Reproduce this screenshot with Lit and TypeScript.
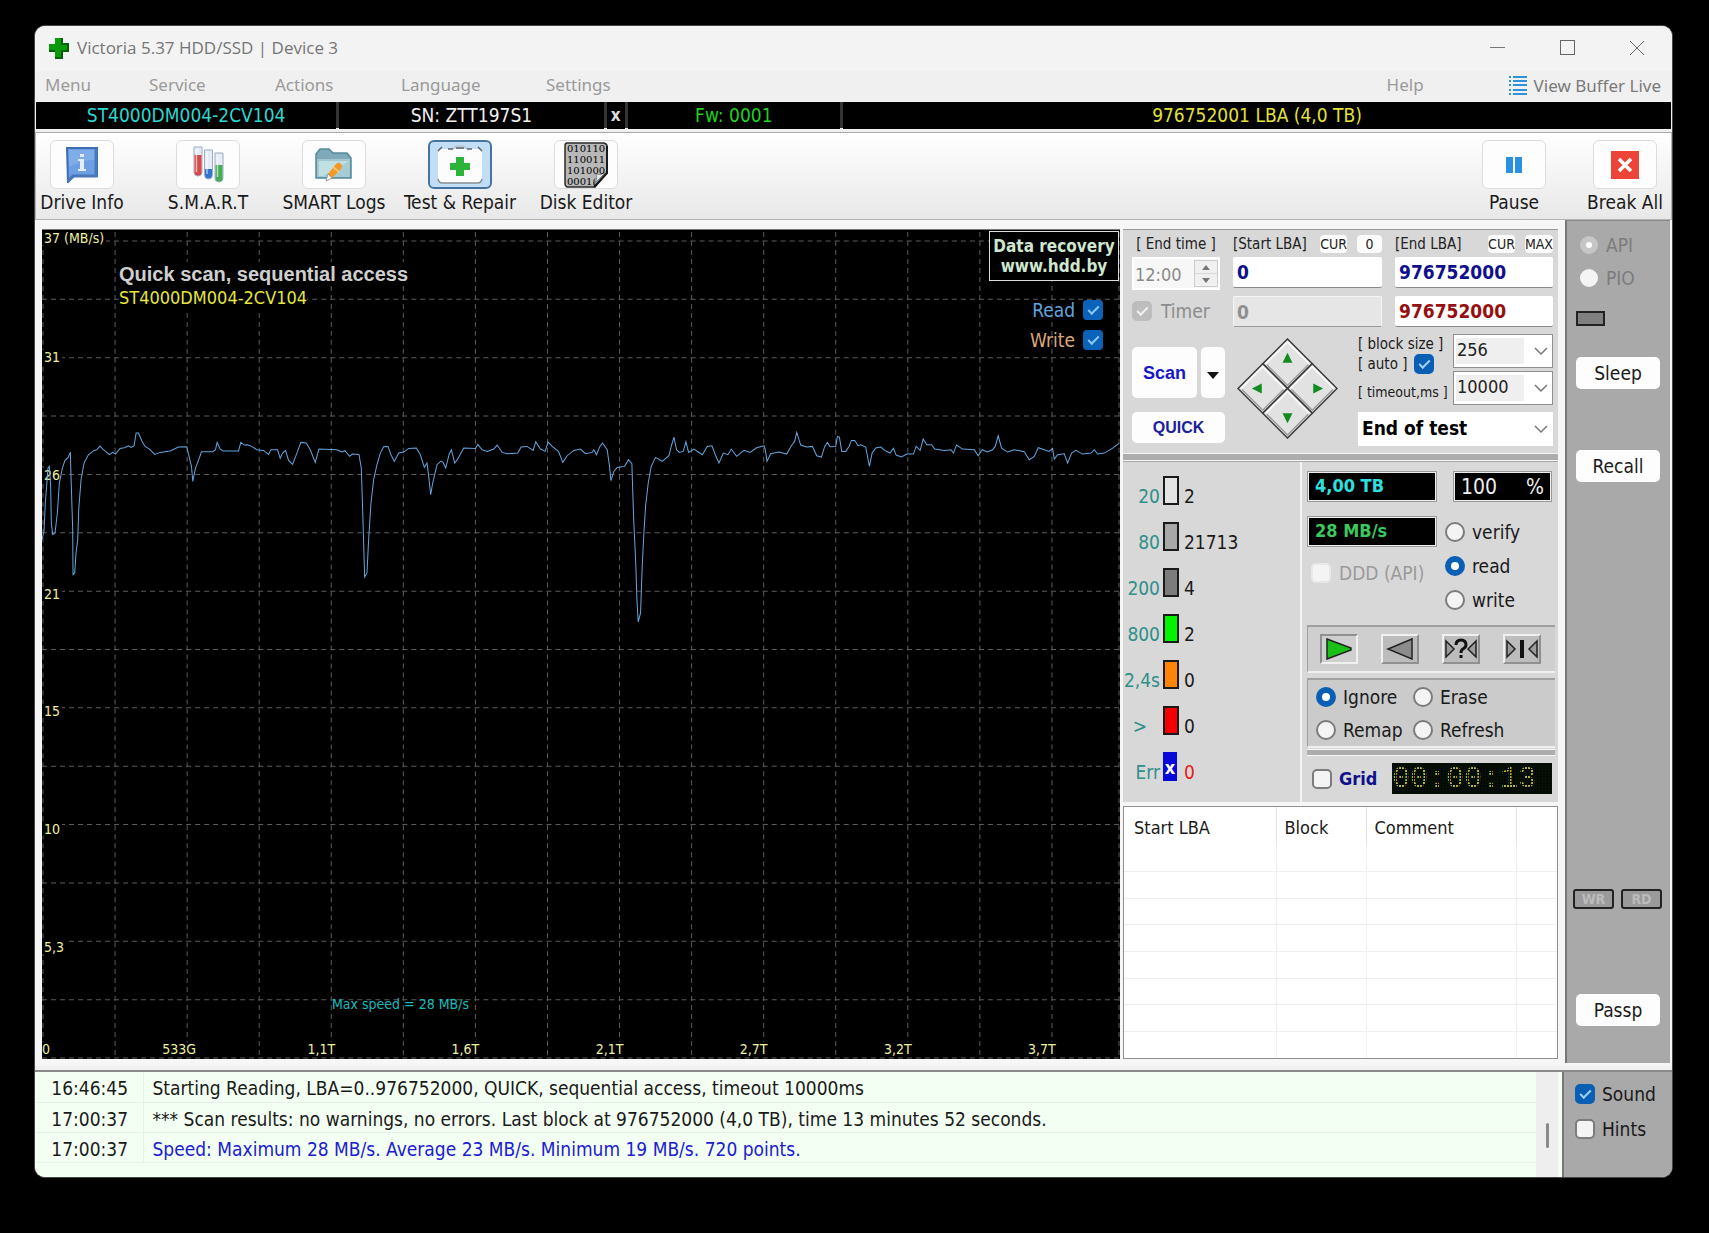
import { LitElement, html, svg, css } from "lit";
import { customElement, state } from "lit/decorators.js";

/* Speed trace, in thirds of a chart pixel, as runs that each start from their own origin. */
const RUNS: { origin: [number, number]; points: string }[] = [
  {
    origin: [-36, -30],
    points:
      "36,960 42,935 46,850 54,745 58,740 62,800 64,910 68,945 75,940 82,880 88,790 97,745 105,722 114,714 121,697 123,770 128,930 129,1065 134,1060 138,1000 143,960 146,870 153,780 162,730 175,705 192,692 200,690 210,679 220,690 238,705 248,698 256,703 270,686 283,684 295,678 303,683 312,678 318,640 325,640 336,665 345,680 358,688 374,704 390,698 420,694 445,682 470,681 478,715 484,740 488,785 496,745 505,722 514,696 548,696 556,690 561,668 570,688 580,694 625,694 632,668 642,676 652,675 664,680 680,690 700,692 715,704 722,690 742,690 750,716 757,700 766,692 775,722 787,734 800,700 812,668 828,670 840,690 855,728 866,688 920,690 935,697 944,693 958,710 966,703 986,704 993,745 998,900 1003,1072 1010,1060 1015,960 1022,850 1030,780 1040,735 1050,700 1060,681 1073,680 1082,705 1092,725 1105,700 1120,697 1135,686 1158,685 1170,705",
  },
  {
    origin: [1074, 510],
    points:
      "72,203 80,190 85,230 91,285 97,250 103,225 110,195 122,184 128,188 136,205 146,165 153,150 163,190 172,178 190,145 225,146 232,134 245,150 260,155 280,148 290,136 305,158 320,162 352,160 362,142 380,140 398,152 406,126 420,148 434,155 443,127 455,140 474,155 487,188 500,168 520,152 540,148 555,162 575,158 580,150 588,165 598,140 606,130 620,150 627,200 631,243 640,215 650,203 672,200 684,180 694,192 699,350 706,500 709,600 713,667 720,640 725,500 730,400 735,320 743,250 752,200 765,173 785,185 805,168 812,140 820,112 828,150 836,158 848,155 856,126 864,158 880,148 905,165 920,140 934,138 944,165 955,190 968,160 982,165 992,148 1008,170 1030,152 1048,158 1068,144 1090,138 1094,150 1099,185 1110,162 1135,157 1158,163 1172,138 1182,125 1188,98",
  },
  {
    origin: [2214, -30],
    points:
      "60,676 78,682 95,680 108,708 122,712 132,680 140,668 148,681 165,680 170,650 176,652 183,695 195,695 205,680 212,662 222,662 232,678 240,675 255,682 262,720 266,740 274,700 285,685 300,682 312,692 328,700 338,686 346,706 362,712 378,703 398,703 406,680 418,692 427,658 438,675 452,675 462,688 490,692 510,690 518,700 527,676 545,688 580,690 592,708 604,690 620,697 635,690 643,680 652,648 662,685 680,697 700,690 730,696 745,720 760,710 772,684 790,690 804,695 815,686 820,718 830,705 850,702 860,730 872,700 885,692 905,703 930,700 940,690 950,703 970,700 995,685 1015,670",
  },
];

const TRACE = RUNS.flatMap(({ origin, points }) =>
  points.split(" ").map((p) => {
    const [x, y] = p.split(",").map(Number);
    return `${(x + origin[0]) / 3},${(y + origin[1]) / 3}`;
  }),
).join(" ");

const CHART_W = 1077;
const CHART_H = 830;

@customElement("speed-chart")
export class SpeedChart extends LitElement {
  static styles = css`
    :host {
      display: block;
      position: relative;
      overflow: hidden;
      background: #000;
      border-top: 1px solid #777;
      font-family: "DejaVu Sans Condensed", "DejaVu Sans", sans-serif;
    }
    .plot {
      position: absolute;
      inset: 0;
      width: 100%;
      height: 100%;
    }
    .grid {
      stroke: #5c5c5c;
      stroke-width: 1;
      stroke-dasharray: 5 4;
      shape-rendering: crispEdges;
    }
    .trace {
      fill: none;
      stroke: #64a6e0;
      stroke-width: 1;
    }
    .tick {
      position: absolute;
      padding: 0 2px;
      background: #000;
      color: #efefa0;
      font-size: 14px;
      line-height: 14px;
    }
    .tick-y {
      left: 0;
      transform: translateY(-50%);
    }
    .tick-x {
      bottom: 3px;
      transform: translateX(-50%);
    }
    .tick-x.origin {
      transform: none;
      padding: 0;
    }
    .heading {
      position: absolute;
      left: 77px;
      top: 32px;
      display: flex;
      flex-direction: column;
      align-items: flex-start;
    }
    .mode {
      font: bold 20px/24px "Liberation Sans", Arial, sans-serif;
      color: #cfcfcf;
      background: #000;
    }
    .model {
      font-size: 18px;
      line-height: 24px;
      color: #e6e63c;
      background: #000;
    }
    .corner {
      position: absolute;
      top: 1px;
      right: 1px;
      display: flex;
      flex-direction: column;
      align-items: flex-end;
    }
    .promo {
      box-sizing: border-box;
      width: 130px;
      height: 50px;
      border: 1px solid #ddd;
      background: #000;
      color: #cfe6cf;
      font-weight: bold;
      font-size: 17px;
      line-height: 20px;
      padding-top: 4px;
      text-align: center;
      text-decoration: none;
      white-space: nowrap;
      margin-bottom: 14px;
    }
    .series {
      display: flex;
      align-items: center;
      gap: 8px;
      height: 30px;
      padding-right: 16px;
      font-size: 19px;
    }
    .read {
      color: #62a4dc;
    }
    .write {
      color: #dca878;
    }
    .max {
      position: absolute;
      left: 290px;
      bottom: 46px;
      font-size: 14px;
      line-height: 18px;
      color: #18bcbc;
    }
    input {
      appearance: none;
      margin: 0;
      width: 20px;
      height: 20px;
      border-radius: 4px;
      background: #0a63b8;
      display: grid;
      place-items: center;
    }
    input::after {
      content: "";
      width: 9px;
      height: 4px;
      margin-bottom: 3px;
      border: solid #8cc8f4;
      border-width: 0 0 2px 2px;
      transform: rotate(-45deg);
    }
    input:not(:checked) {
      background: #f4f4f4;
    }
    input:not(:checked)::after {
      visibility: hidden;
    }
  `;

  private yTicks = [
    ["37 (MB/s)", 8],
    ["31", 127],
    ["26", 245],
    ["21", 364],
    ["15", 482],
    ["10", 600],
    ["5,3", 718],
  ] as [string, number][];

  private xTicks = [
    ["533G", 137],
    ["1,1T", 279],
    ["1,6T", 423],
    ["2,1T", 567],
    ["2,7T", 711],
    ["3,2T", 855],
    ["3,7T", 999],
  ] as [string, number][];

  render() {
    const cols = Array.from({ length: 15 }, (_, i) => 1 + i * 72).concat(CHART_W - 1);
    const rows = Array.from({ length: 15 }, (_, i) => 11 + i * 58.43);
    return html`
      <svg class="plot" viewBox="0 0 ${CHART_W} ${CHART_H}" preserveAspectRatio="none" aria-label="Read speed">
        ${cols.map((x) => svg`<line class="grid" x1=${x} x2=${x} y1="2" y2=${CHART_H}></line>`)}
        ${rows.map((y) => svg`<line class="grid" x1="0" x2=${CHART_W} y1=${y} y2=${y}></line>`)}
      </svg>
      ${this.yTicks.map(([t, y]) => html`<span class="tick tick-y" style="top:${(y / CHART_H) * 100}%">${t}</span>`)}
      <span class="tick tick-x origin">0</span>
      ${this.xTicks.map(([t, x]) => html`<span class="tick tick-x" style="left:${(x / CHART_W) * 100}%">${t}</span>`)}
      <svg class="plot" viewBox="0 0 ${CHART_W} ${CHART_H}" preserveAspectRatio="none" aria-hidden="true">
        <polyline class="trace" points=${TRACE}></polyline>
      </svg>
      <div class="heading">
        <span class="mode">Quick scan, sequential access</span>
        <span class="model">ST4000DM004-2CV104</span>
      </div>
      <div class="corner">
        <a class="promo" href="#">Data recovery<br />www.hdd.by</a>
        <label class="series read">Read<input type="checkbox" checked /></label>
        <label class="series write">Write<input type="checkbox" checked /></label>
      </div>
      <span class="max">Max speed = 28 MB/s</span>
    `;
  }
}

const icons = {
  cross: svg`<svg width="21" height="22" viewBox="0 0 21 22"><path d="M7 1h7v6h6v7h-6v7H7v-7H1V7h6z" fill="#0a9a0a"/><path d="M14 1v6h6v7h-6v7H7M7 14H1" fill="none" stroke="#055f05" stroke-width="2"/></svg>`,
  info: svg`<svg width="33" height="36" viewBox="0 0 33 36"><path d="M1 1h30v28H8l-6 6z" fill="#6b9ee4" stroke="#3f6db2" stroke-width="2"/><path d="M3 3h26v24H3z" fill="#6d9fe4"/><path d="M3 3h26v10Q16 12 3 20z" fill="#7fade9"/><path d="M30 2v27H7l-5 5" fill="none" stroke="#4a78bb" stroke-width="3"/><g fill="#e4eefb"><rect x="14" y="7" width="4" height="3"/><path d="M12 12h6v10h2v2h-8v-2h2v-8h-2z"/></g></svg>`,
  tubes: svg`<svg width="31" height="37" viewBox="0 0 31 37"><g stroke="#9dabc4" stroke-width="1" fill="#e6ecf5"><path d="M1 1h8v25a4 4 0 0 1-8 0z"/><path d="M11.500 4h8v25a4 4 0 0 1-8 0z"/><path d="M22 7h8v25a4 4 0 0 1-8 0z"/></g><path d="M1.500 9h7v17a3.500 3.500 0 0 1-7 0z" fill="#d94848"/><path d="M12 23h7v6a3.500 3.500 0 0 1-7 0z" fill="#3474cc"/><path d="M22.500 19h7v13a3.500 3.500 0 0 1-7 0z" fill="#43ac58"/><path d="M3.500 3v23M14 6v22M24.500 9v22" stroke="#fff" stroke-opacity=".6" stroke-width="1.500"/></svg>`,
  folder: svg`<svg width="38" height="34" viewBox="0 0 38 34"><path d="M1 6l4-5h9l4 4h14l4 5v20H1z" fill="#7fa9b8" stroke="#55899b" stroke-width="1.500"/><path d="M2 11h33v18H2z" fill="#a3c6d0"/><path d="M4 13h30v15H4z" fill="#c0e0e4"/><path d="M34 13v16H6z" fill="#a5cdd6"/><path d="M13 26l8-10q3-3 5 0 2 2 0 5l-9 9z" fill="#f29a28"/><path d="M18 19l6 5" stroke="#ffc470" stroke-width="2"/><path d="M13 26l4 4-6 3z" fill="#fff" stroke="#999"/></svg>`,
  repair: svg`<svg width="48" height="40" viewBox="0 0 48 40"><rect x="2" y="4" width="44" height="34" rx="4" fill="#fcfcfc"/><path d="M2 34q1 4 4 4h36q3 0 4-4" fill="none" stroke="#8b8f93" stroke-width="1.500"/><path d="M2 6l4-4M46 6l-4-4M12 4h5M20 3h8M31 4h5" fill="none" stroke="#5d6368" stroke-width="1.500"/><path d="M17 4l3-3h8l3 3" fill="none" stroke="#b4b8bc"/><path d="M20 12h8v6h6v7h-6v6h-8v-6h-6v-7h6z" fill="#2cb43a"/></svg>`,
  editor: svg`<svg width="44" height="46" viewBox="0 0 44 46"><path d="M3 1h37q3 1 3 3v27L31 45H3q-2-1-2-3V4q0-3 2-3z" fill="#b8b8b8" stroke="#2a2a2a" stroke-width="1.500"/><path d="M43 4v27L30 45" fill="none" stroke="#1a1a1a" stroke-width="2"/><path d="M29 43q5-4 3-11 5 2 10-2z" fill="#e4e4e4" stroke="#888"/><g font-family="DejaVu Serif, serif" font-size="10" fill="#000"><text x="3" y="10">010110</text><text x="3" y="21">110011</text><text x="3" y="32">101000</text><text x="3" y="43">0001(</text></g></svg>`,
  pause: svg`<svg width="16" height="16" viewBox="0 0 16 16"><path d="M0 0h7v16H0zM9 0h7v16H9z" fill="#2a90e0"/></svg>`,
  stop: svg`<svg width="28" height="28" viewBox="0 0 28 28"><rect width="28" height="28" fill="#ec4438"/><path d="M8 8l12 12M20 8L8 20" stroke="#fff" stroke-width="3.500"/></svg>`,
  list: svg`<svg width="19" height="20" viewBox="0 0 19 20"><path d="M5 1h14M5 5h14M5 9h14M5 14h14M5 18h14" stroke="#2f93dc" stroke-width="2"/><path d="M1 1h2M1 5h2M1 9h2M1 14h2M1 18h2" stroke="#2f93dc" stroke-width="2"/></svg>`,
  down: svg`<svg class="chev" width="14" height="9" viewBox="0 0 14 9"><path d="M1 1l6 6 6-6" fill="none" stroke="#777" stroke-width="1.500"/></svg>`,
};

@customElement("app-root")
export class AppRoot extends LitElement {
  static styles = css`
    :host {
      box-sizing: border-box;
      min-height: 100vh;
      padding: 25px 36px 55px 34px;
      background: #000;
      color: #1a1a1a;
      font: 19px/22px "DejaVu Sans Condensed", "DejaVu Sans", sans-serif;
      display: flex;
      flex-direction: column;
    }
    * {
      box-sizing: border-box;
    }
    button,
    input,
    select {
      font: inherit;
      color: inherit;
      margin: 0;
    }
    button {
      padding: 0;
      border: 0;
      white-space: nowrap;
    }
    .window {
      flex: 1;
      display: flex;
      flex-direction: column;
      border: 1px solid #454545;
      border-radius: 11px;
      background: #f0f0f0;
      overflow: hidden;
    }
    .title {
      display: flex;
      align-items: center;
      height: 45px;
      padding: 0 19px 2px 13px;
      background: #f3f3f3;
      color: #757575;
      font: 18px/24px "Open Sans", "Noto Sans", sans-serif;
    }
    .title svg {
      flex: none;
    }
    .caption {
      flex: 1;
      font-size: 17px;
      font-weight: normal;
      margin: 0 0 0 8px;
    }
    .winbtns {
      display: flex;
      gap: 38px;
    }
    .winbtns button {
      display: grid;
      place-items: center;
      width: 32px;
      height: 32px;
      background: none;
    }
    .menu {
      display: flex;
      align-items: center;
      height: 31px;
      color: #9a9a9a;
      font: 17px/24px "Noto Sans", sans-serif;
      padding: 0 11px 4px 10px;
    }
    .menu button {
      background: none;
      text-align: left;
    }
    .m1 { width: 104px; }
    .m2 { width: 126px; }
    .m3 { width: 126px; }
    .m4 { width: 145px; }
    .m5 { margin-right: auto; }
    .menu .m6 { width: 121px; }
    .menu .buffer {
      display: flex;
      align-items: center;
      gap: 7px;
      color: #7a7a7a;
      padding-top: 2px;
    }
    .drive {
      display: grid;
      grid-template-columns: 301fr 265fr 18fr 213fr 830fr;
      gap: 3px;
      height: 26px;
      background: #333;
      margin: 0 1px;
      text-align: center;
    }
    .drive span,
    .drive button {
      background: #000;
      white-space: nowrap;
      line-height: 27px;
    }
    .d-model { color: #2cd8d0; }
    .d-sn { color: #f0f0f0; }
    .drive .d-x { color: #ddd; font-weight: bold; font-size: 17px; }
    .d-fw { color: #1fd01f; }
    .d-lba { color: #e2e23a; }
    .toolbar {
      display: flex;
      height: 88px;
      margin-top: 4px;
      padding: 7px 0 1px 1px;
      border: 1px solid #b4b4b4;
      border-top-color: #a8a8a8;
      background: linear-gradient(#fff, #e8e8e8);
    }
    .tool {
      display: flex;
      flex-direction: column;
      align-items: center;
      gap: 2px;
      width: 126px;
      background: none;
    }
    .tool:first-child { width: 90px; margin-right: 18px; }
    .tool.pause { margin-left: auto; width: 130px; }
    .tool.stop { width: 92px; }
    .tile {
      display: grid;
      place-items: center;
      width: 64px;
      height: 49px;
      border: 1px solid #dcdcdc;
      border-radius: 6px;
      background: #fdfdfd;
    }
    .tile.on {
      background: #c2def6;
      border: 2px solid #47749f;
    }
    .body {
      flex: 1;
      display: grid;
      grid-template-columns: minmax(0, 1fr) 436px 110px;
      column-gap: 3px;
      background: #f6f6f6;
      padding-left: 7px;
    }
    speed-chart {
      margin: 9px 0 7px;
    }
    .right {
      display: flex;
      flex-direction: column;
      margin: 9px 1px 7px 0;
    }
    .side {
      display: flex;
      flex-direction: column;
      align-items: flex-start;
      margin: 0 2px 3px 3px;
      padding: 14px 8px 37px 9px;
      background: #a9a9a9;
      border-left: 2px solid #777;
      border-top: 1px solid #8a8a8a;
    }
    .setup {
      display: grid;
      grid-template-columns: 88px 149px 1fr;
      column-gap: 13px;
      background: #d8d8d8;
      border-top: 1px solid #999;
      padding: 4px 5px 0 9px;
      height: 224px;
      grid-template-rows: 18px 31px 30px 111px;
      row-gap: 5px;
      align-items: start;
    }
    .cap {
      display: flex;
      align-items: center;
      justify-content: space-between;
      margin-top: 1px;
      font-size: 15px;
      line-height: 18px;
      white-space: nowrap;
      color: #222;
    }
    .cap button {
      background: #fbfbfb;
      border-radius: 4px;
      height: 18px;
      min-width: 25px;
      font-size: 14px;
      line-height: 18px;
    }
    .cap.center { justify-content: center; }
    .cap label { margin-right: auto; }
    .cap.center label { margin: 0; }
    .cap .gapb { margin-right: 10px; }
    .field {
      width: 100%;
      height: 31px;
      border: 0;
      border-bottom: 1px solid #8a8a8a;
      border-radius: 2px;
      background: #fff;
      padding: 0 4px;
      font-weight: bold;
      color: #10108c;
    }
    .field.red { color: #961010; }
    .field.off {
      background: #e6e6e6;
      border: 1px solid #f4f4f4;
      border-bottom-color: #999;
      color: #909090;
      padding: 0 3px;
    }
    .time {
      display: flex;
      width: 88px;
      height: 33px;
      background: #f7f7f7;
      border: 2px solid #fff;
    }
    .time input {
      width: 60px;
      min-width: 0;
      border: 0;
      padding: 3px 0 0 1px;
      background: none;
      color: #8a8a8a;
      font-size: 18px;
    }
    .spin {
      display: grid;
      width: 24px;
      margin: 1px 0;
      background: #d8d8d8;
      gap: 1px;
      border: 1px solid #ccc;
    }
    .spin button {
      display: grid;
      place-items: center;
      background: #f0f0f0;
    }
    .row {
      display: flex;
      align-items: center;
    }
    .row.timer {
      gap: 9px;
      height: 32px;
      color: #8c8c8c;
      margin-top: 2px;
    }
    .second { margin-top: 3px; }
    .lower {
      grid-column: 1 / -1;
      margin-top: 6px;
      display: grid;
      grid-template-columns: 93px 99px 195px;
      justify-content: space-between;
      height: 111px;
      align-content: start;
    }
    .runs {
      display: grid;
      grid-template-columns: 65px 24px;
      grid-template-rows: 51px 31px;
      gap: 14px 4px;
      padding-top: 13px;
    }
    .runs button {
      background: #fdfdfd;
      border-radius: 5px;
      color: #1818c8;
      font: bold 18px/22px "Liberation Sans", Arial, sans-serif;
    }
    .runs .quick {
      grid-column: 1 / -1;
      font-size: 16px;
      color: #20209c;
    }
    .pad { padding-top: 4px; margin-left: -5px; }
    .opts {
      display: grid;
      grid-template-columns: 91px 100px;
      grid-template-rows: 34px 34px 34px;
      gap: 3px 4px;
      font-size: 15px;
      line-height: 20px;
      white-space: nowrap;
    }
    .opts > .row { padding-top: 8px; font-size: 14px; }
    .opts .combo.wide { grid-column: 1 / -1; margin-top: 4px; }
    .stack { display: flex; flex-direction: column; overflow: visible; }
    .stack .row { gap: 7px; height: 20px; }
    .combo {
      display: grid;
      align-items: center;
    }
    .combo select,
    .combo svg {
      grid-area: 1 / 1;
    }
    .combo select {
      appearance: none;
      width: 100%;
      height: 34px;
      border: 1px solid #8f8f8f;
      border-radius: 0;
      background: #fff;
      padding: 0 3px 2px;
      font-size: 18px;
      color: #222;
    }
    .combo.soft select {
      background: linear-gradient(#efefef, #efefef) 2px 3px / 68px 26px no-repeat #fff;
    }
    .combo.wide select {
      border: 0;
      font-weight: bold;
      font-size: 19px;
      color: #000;
      padding-left: 4px;
    }
    .chev {
      justify-self: end;
      margin-right: 5px;
      pointer-events: none;
    }
    .split {
      height: 8px;
      background: #adadad;
      border: solid #f6f6f6;
      border-width: 1px 0;
    }
    .status {
      display: grid;
      grid-template-columns: 179px 1fr;
      background: #d8d8d8;
      border-top: 1px solid #a8a8a8;
      height: 341px;
    }
    .counts {
      padding: 12px 0 0;
      border-right: 2px solid #f4f4f4;
    }
    .count {
      display: grid;
      grid-template-columns: 37px 16px 1fr;
      column-gap: 3px;
      height: 46px;
    }
    .count .ms {
      text-align: right;
      color: #2f8f8a;
      padding-top: 11px;
      justify-self: end;
      white-space: nowrap;
    }
    .count .gt { padding-right: 13px; }
    .count .n { padding: 11px 0 0 2px; }
    .bar {
      height: 29px;
      margin-top: 2px;
      border: 2px solid #1a1a1a;
    }
    .b1 { background: #e4e4e4; }
    .b2 { background: #a8a8a8; }
    .b3 { background: #7c7c7c; }
    .b4 { background: #00f400; }
    .b5 { background: #ff8408; }
    .b6 { background: #f40000; }
    .bx {
      border: 0;
      width: 14px;
      background: #0808d8;
      color: #fff;
      font-weight: bold;
      font-size: 18px;
      line-height: 31px;
      text-align: center;
    }
    .err { color: #e02020; }
    .panel {
      display: flex;
      flex-direction: column;
      padding: 9px 3px 0 5px;
    }
    .meters {
      display: grid;
      grid-template-columns: 130px 1fr;
      column-gap: 16px;
      padding-right: 3px;
      height: 154px;
    }
    .meters > div {
      display: flex;
      flex-direction: column;
      gap: 14px;
    }
    .lcd {
      height: 31px;
      border: 1px solid #999;
      outline: 1px solid #eee;
      outline-offset: -2px;
      background: #000;
      padding: 0 7px;
      font-weight: bold;
      font-size: 18px;
      line-height: 28px;
    }
    .cyan { color: #2ce0e0; }
    .green { color: #3cc860; }
    .lcd.pct {
      display: flex;
      justify-content: space-between;
      font-weight: normal;
      font-size: 21px;
      line-height: 30px;
      color: #eee;
    }
    .meters .modes { gap: 2px; }
    .modes .pct { margin-bottom: 12px; }
    .modes label {
      margin-left: -8px;
      gap: 7px;
      height: 32px;
    }
    .ddd { gap: 8px; padding: 1px 0 0 4px; color: #9a9a9a; }
    .nav {
      display: flex;
      justify-content: space-between;
      align-items: center;
      height: 48px;
      background: #cfcfcf;
      border-top: 2px solid #a0a0a0;
      border-left: 1px solid #a0a0a0;
      border-bottom: 2px solid #f0f0f0;
      padding: 0 14px 0 12px;
    }
    .nav button {
      display: grid;
      place-items: center;
      width: 38px;
      height: 30px;
      background: #bcbcbc;
      border: 2px solid #f0f0f0;
      border-right-color: #909090;
      border-bottom-color: #909090;
    }
    .nav .play {
      background: #cfcfcf;
      border-color: #909090 #f0f0f0 #f0f0f0 #909090;
    }
    .acts {
      display: grid;
      grid-template-columns: 97px 1fr;
      align-content: center;
      height: 70px;
      margin-top: 5px;
      background: #cbcbcb;
      border-top: 2px solid #a0a0a0;
      border-left: 1px solid #a0a0a0;
      border-bottom: 2px solid #f0f0f0;
      padding-left: 8px;
    }
    .acts label { gap: 7px; height: 33px; }
    .panel .split { height: 7px; margin-top: 1px; }
    .foot {
      display: flex;
      align-items: center;
      padding: 7px 3px 0 5px;
    }
    .foot label {
      gap: 7px;
      color: #10108c;
      font-weight: bold;
      font-size: 18px;
      margin-right: auto;
    }
    .clock {
      width: 160px;
      height: 31px;
      overflow: hidden;
      color: #b4b240;
      background: #030803;
      font: 30px/31px "Liberation Mono", monospace;
      display: grid;
      grid-template-rows: 31px;
    }
    .clock time,
    .clock i { grid-area: 1 / 1; }
    .clock time { padding-top: 1px; }
    .clock i {
      background:
        repeating-linear-gradient(90deg, #061006 0 1px, transparent 1px 3px),
        repeating-linear-gradient(#061006 0 1px, transparent 1px 3px);
    }
    .defects {
      flex: 1;
      margin-top: 4px;
      background: #fff;
      border: 1px solid #8e8e8e;
      display: flex;
      overflow: hidden;
    }
    table {
      border-collapse: collapse;
      table-layout: fixed;
    }
    .defects table { width: 100%; }
    .defects th {
      height: 38px;
      padding: 4px 0 0 8px;
      text-align: left;
      font-weight: normal;
      font-size: 18px;
      border-right: 1px solid #e2e2e2;
    }
    .defects th:first-child { padding-left: 10px; }
    .defects td {
      height: 26px;
      padding: 0;
      border-right: 1px solid #efefef;
      border-bottom: 1px solid #efefef;
    }
    .defects th:last-child,
    .defects td:last-child { border-right: 0; }
    .defects tr:last-child td { border-bottom: 0; }
    .c1 { width: 152px; }
    .c2 { width: 90px; }
    .c3 { width: 150px; }
    .tick,
    .dot {
      appearance: none;
      flex: none;
      width: 20px;
      height: 20px;
      background: #f4f4f4;
      border: 2px solid #7c7c7c;
      display: grid;
      place-items: center;
    }
    .tick { border-radius: 5px; }
    .dot { border-radius: 50%; }
    .tick:checked { background: #0a5fb4; border-color: #0a5fb4; }
    .tick:checked::after {
      content: "";
      width: 9px;
      height: 4px;
      margin-bottom: 3px;
      border: solid #9cd0f4;
      border-width: 0 0 2px 2px;
      transform: rotate(-45deg);
    }
    .dot:checked { border: 6px solid #0a5fb4; background: #fff; }
    .tick:disabled { border-color: #e8e8e8; background: #f4f4f4; }
    .tick:disabled:checked { border-color: #bdbdbd; background: #bdbdbd; }
    .tick:disabled:checked::after { border-color: #f0f0f0; }
    .dot:disabled { border-color: #f4f4f4; }
    .dot:disabled:checked { border-color: #c6c6c6; }
    .sound .row { gap: 7px; height: 20px; }
    .side .row { gap: 8px; height: 20px; color: #7c7c7c; margin-bottom: 13px; }
    .side .dot { margin-left: 4px; width: 18px; height: 18px; }
    .led {
      width: 29px;
      height: 15px;
      margin-top: 10px;
      margin-bottom: 31px;
      background: #808080;
      border: 2px solid #222;
    }
    .side .push {
      width: 84px;
      height: 32px;
      background: #fdfdfd;
      border-radius: 5px;
      line-height: 32px;
    }
    .side .recall { margin-top: 61px; }
    .lamps {
      display: flex;
      gap: 7px;
      margin: auto -3px 85px;
    }
    .lamps span {
      width: 41px;
      height: 20px;
      border: 2px solid #222;
      border-radius: 3px;
      background: #9a9a9a;
      color: #bcbcbc;
      font-weight: bold;
      font-size: 14px;
      line-height: 16px;
      text-align: center;
    }
    .bottom {
      display: grid;
      grid-template-columns: minmax(0, 1fr) 110px;
      height: 107px;
      margin-top: 4px;
      border-top: 2px solid #8a8a8a;
    }
    .log {
      display: grid;
      grid-template-columns: minmax(0, 1fr) 22px 4px;
      background: #f4fff4;
      overflow: hidden;
      padding-left: 2px;
    }
    .log table { width: 100%; align-self: start; }
    .log td {
      height: 30px;
      padding: 3px 0 0 9px;
      border-bottom: 1px solid #e9f0e9;
      white-space: nowrap;
    }
    .log .when { width: 106px; padding: 3px 0 0; text-align: center; border-right: 1px solid #e9f0e9; }
    .log .blue { color: #2020d0; }
    .bar-track { background: #eee; padding: 51px 0 0 10px; }
    .thumb { width: 3px; height: 25px; border-radius: 2px; background: #8a8a8a; }
    .sound {
      background: #a9a9a9;
      border-left: 2px solid #777;
      padding: 12px 0 0 11px;
      display: flex;
      flex-direction: column;
      gap: 15px;
    }
  `;

  @state() private counts = [
    ["20", "b1", "2"],
    ["80", "b2", "21713"],
    ["200", "b3", "4"],
    ["800", "b4", "2"],
    ["2,4s", "b5", "0"],
    [">", "b6", "0"],
    ["Err", "bx", "0"],
  ];

  private log = [
    ["16:46:45", "Starting Reading, LBA=0..976752000, QUICK, sequential access, timeout 10000ms", ""],
    ["17:00:37", "*** Scan results: no warnings, no errors. Last block at 976752000 (4,0 TB), time 13 minutes 52 seconds.", ""],
    ["17:00:37", "Speed: Maximum 28 MB/s. Average 23 MB/s. Minimum 19 MB/s. 720 points.", "blue"],
  ];

  private tool(label: string, icon: unknown, cls = "", on = false) {
    return html`<button class="tool ${cls}"><span class="tile ${on ? "on" : ""}">${icon}</span>${label}</button>`;
  }

  private radio(name: string, label: string, checked = false, disabled = false) {
    return html`<label class="row"
      ><input class="dot" type="radio" name=${name} ?checked=${checked} ?disabled=${disabled} />${label}</label
    >`;
  }

  private chrome() {
    return html`
      <header class="title">
        ${icons.cross}
        <h1 class="caption">Victoria 5.37 HDD/SSD | Device 3</h1>
        <div class="winbtns">
          <button aria-label="Minimize"><svg width="15" height="15"><path d="M0 7.5h15" stroke="#777" /></svg></button>
          <button aria-label="Maximize">
            <svg width="15" height="15"><rect x=".5" y=".5" width="14" height="14" fill="none" stroke="#666" /></svg>
          </button>
          <button aria-label="Close"><svg width="16" height="16"><path d="M1 1l14 14M15 1L1 15" stroke="#666" /></svg></button>
        </div>
      </header>
      <nav class="menu">
        <button class="m1">Menu</button><button class="m2">Service</button><button class="m3">Actions</button
        ><button class="m4">Language</button><button class="m5">Settings</button><button class="m6">Help</button>
        <button class="buffer">${icons.list}View Buffer Live</button>
      </nav>
      <div class="drive">
        <span class="d-model">ST4000DM004-2CV104</span>
        <span class="d-sn">SN: ZTT197S1</span>
        <button class="d-x">x</button>
        <span class="d-fw">Fw: 0001</span>
        <span class="d-lba">976752001 LBA (4,0 TB)</span>
      </div>
      <div class="toolbar">
        ${this.tool("Drive Info", icons.info)} ${this.tool("S.M.A.R.T", icons.tubes)}
        ${this.tool("SMART Logs", icons.folder)} ${this.tool("Test & Repair", icons.repair, "", true)}
        ${this.tool("Disk Editor", icons.editor)} ${this.tool("Pause", icons.pause, "pause")}
        ${this.tool("Break All", icons.stop, "stop")}
      </div>
    `;
  }

  private setup() {
    return html`
      <section class="setup">
        <div class="cap center"><label for="time">[ End time ]</label></div>
        <div class="cap">
          <label for="start">[Start LBA]</label><button class="gapb">CUR</button><button>0</button>
        </div>
        <div class="cap">
          <label for="end">[End LBA]</label><button class="gapb">CUR</button><button>MAX</button>
        </div>
        <div class="time">
          <input id="time" value="12:00" disabled />
          <div class="spin">
            <button aria-label="Later"><svg width="8" height="5"><path d="M0 5l4-5 4 5z" fill="#777" /></svg></button>
            <button aria-label="Earlier"><svg width="8" height="5"><path d="M0 0l4 5 4-5z" fill="#777" /></svg></button>
          </div>
        </div>
        <input class="field" id="start" value="0" />
        <input class="field" id="end" value="976752000" />
        <label class="row timer"><input class="tick" type="checkbox" checked disabled />Timer</label>
        <input class="field off second" aria-label="Current start" value="0" disabled />
        <input class="field red second" aria-label="Current end" value="976752000" />
        <div class="lower">
          <div class="runs">
            <button>Scan</button>
            <button aria-label="Scan options"><svg width="12" height="7"><path d="M0 0h12l-6 7z" fill="#111" /></svg></button>
            <button class="quick">QUICK</button>
          </div>
          <div class="pad">${this.diamond()}</div>
          <div class="opts">
            <div class="stack">
              <label for="block">[ block size ]</label>
              <label class="row">[ auto ]<input class="tick" type="checkbox" checked /></label>
            </div>
            <div class="combo soft">
              <select id="block"><option>256</option></select>${icons.down}
            </div>
            <label class="row" for="timeout">[ timeout,ms ]</label>
            <div class="combo soft">
              <select id="timeout"><option>10000</option></select>${icons.down}
            </div>
            <div class="combo wide">
              <select aria-label="After the scan"><option>End of test</option></select>${icons.down}
            </div>
          </div>
        </div>
      </section>
    `;
  }

  private diamond() {
    const cell = (x: number, y: number) => svg`
      <path d="M${x} ${y - 25}l25 25-25 25-25-25z" fill="#e2e2e2" stroke="#3a3a3a" stroke-width="1.5"/>
      <path d="M${x - 22} ${y}l22 -22 22 22" fill="none" stroke="#fff" stroke-width="1.5"/>
      <path d="M${x - 21} ${y + 1}l21 21 21 -21" fill="none" stroke="#9a9a9a" stroke-width="1.5"/>`;
    return html`<svg width="101" height="101" viewBox="-1 -1 102 102" role="img" aria-label="Seek direction">
      ${cell(50, 25)} ${cell(25, 50)} ${cell(75, 50)} ${cell(50, 75)}
      <g fill="#128a1e">
        <path d="M50 14l5 10H45z" />
        <path d="M50 85l5-10H45z" />
        <path d="M14 50l10-5v10z" />
        <path d="M86 50l-10-5v10z" />
      </g>
    </svg>`;
  }

  private status() {
    return html`
      <section class="status">
        <div class="counts">
          ${this.counts.map(
            ([ms, bar, n]) => html`<div class="count">
              <span class="ms ${ms === ">" ? "gt" : ""}">${ms}</span>
              <span class="bar ${bar}">${bar === "bx" ? "x" : ""}</span>
              <span class="n ${bar === "bx" ? "err" : ""}">${n}</span>
            </div>`,
          )}
        </div>
        <div class="panel">
          <div class="meters">
            <div>
              <div class="lcd cyan">4,00 TB</div>
              <div class="lcd green">28 MB/s</div>
              <label class="row ddd"><input class="tick" type="checkbox" disabled />DDD (API)</label>
            </div>
            <div class="modes">
              <div class="lcd pct"><span>100</span><span>%</span></div>
              ${this.radio("mode", "verify")} ${this.radio("mode", "read", true)} ${this.radio("mode", "write")}
            </div>
          </div>
          <div class="nav">
            <button class="play" aria-label="Forward">
              <svg width="28" height="22"><path d="M2 1l24 9v2L2 21z" fill="#18c018" stroke="#222" stroke-width="1.5" /></svg>
            </button>
            <button aria-label="Backward">
              <svg width="28" height="22"><path d="M26 1L2 11l24 10z" fill="#8c8c8c" stroke="#222" stroke-width="1.5" /></svg>
            </button>
            <button aria-label="Random">
              <svg width="34" height="22" viewBox="0 0 34 22">
                <path d="M2 3l8 8-8 8zM32 3l-8 8 8 8z" fill="#9c9c9c" stroke="#222" stroke-width="1.5" />
                <path d="M12 7q0-5 5-5t5 5q0 2-3 4-2 1-2 4M17 17v3" fill="none" stroke="#111" stroke-width="3" />
              </svg>
            </button>
            <button aria-label="Butterfly">
              <svg width="34" height="22" viewBox="0 0 34 22">
                <path d="M2 3l8 8-8 8zM32 3l-8 8 8 8z" fill="#9c9c9c" stroke="#222" stroke-width="1.5" />
                <path d="M17 2v18" stroke="#111" stroke-width="4" />
              </svg>
            </button>
          </div>
          <div class="acts">
            ${this.radio("act", "Ignore", true)} ${this.radio("act", "Erase")} ${this.radio("act", "Remap")}
            ${this.radio("act", "Refresh")}
          </div>
          <div class="split"></div>
          <div class="foot">
            <label class="row"><input class="tick" type="checkbox" />Grid</label>
            <div class="clock"><time>00:00:13</time><i></i></div>
          </div>
        </div>
      </section>
    `;
  }

  render() {
    return html`
      <div class="window">
        ${this.chrome()}
        <main class="body">
          <speed-chart></speed-chart>
          <div class="right">
            ${this.setup()}
            <div class="split"></div>
            ${this.status()}
            <div class="defects">
              <table>
                <thead>
                  <tr><th class="c1">Start LBA</th><th class="c2">Block</th><th class="c3">Comment</th><th></th></tr>
                </thead>
                <tbody>
                  ${Array.from({ length: 8 }, () => html`<tr><td></td><td></td><td></td><td></td></tr>`)}
                </tbody>
              </table>
            </div>
          </div>
          <aside class="side">
            ${this.radio("bus", "API", true, true)} ${this.radio("bus", "PIO", false, true)}
            <span class="led"></span>
            <button class="push">Sleep</button>
            <button class="push recall">Recall</button>
            <div class="lamps"><span>WR</span><span>RD</span></div>
            <button class="push">Passp</button>
          </aside>
        </main>
        <footer class="bottom">
          <div class="log">
            <table>
              <tbody>
                ${this.log.map(
                  ([when, text, cls]) => html`<tr><td class="when">${when}</td><td class=${cls}>${text}</td></tr>`,
                )}
              </tbody>
            </table>
            <div class="bar-track"><div class="thumb"></div></div>
          </div>
          <div class="sound">
            <label class="row"><input class="tick" type="checkbox" checked />Sound</label>
            <label class="row"><input class="tick" type="checkbox" />Hints</label>
          </div>
        </footer>
      </div>
    `;
  }
}
